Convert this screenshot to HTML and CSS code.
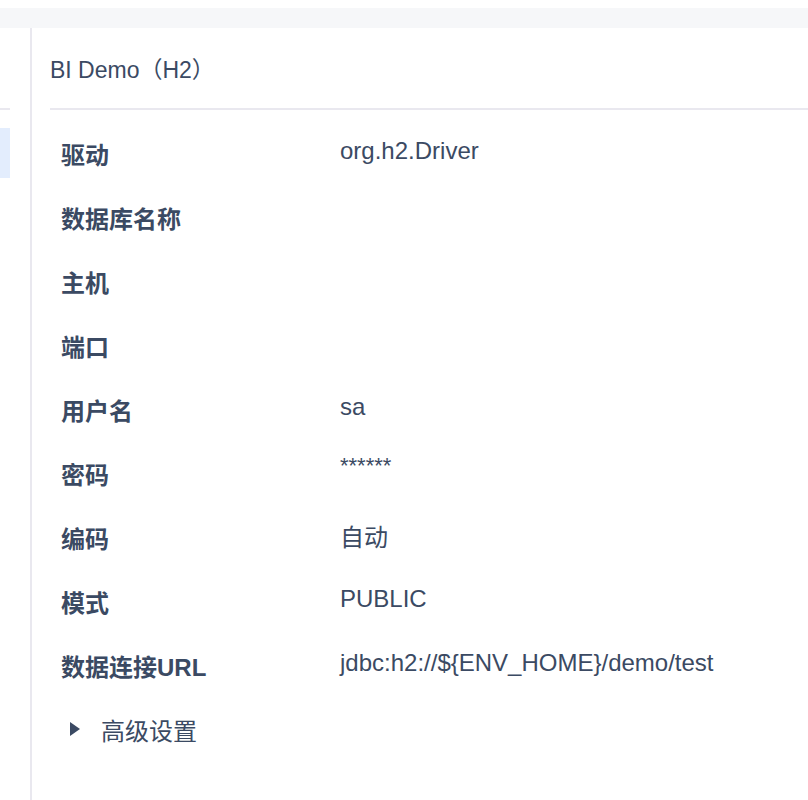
FILE: index.html
```html
<!DOCTYPE html>
<html>
<head>
	<meta charset="utf-8">
	<title>BI Demo（H2）</title>
	<link rel="stylesheet" href="styles.css">
</head>
<body>
	<div class="topbar"></div>
	<div class="main">
		<div class="sidebar">
			<div class="side-head"></div>
			<div class="side-item"></div>
		</div>
		<div class="content">
			<div class="header">BI Demo（H2）</div>
			<div class="fields">
				<div class="row"><div class="label">驱动</div><div class="value">org.h2.Driver</div></div>
				<div class="row"><div class="label">数据库名称</div><div class="value"></div></div>
				<div class="row"><div class="label">主机</div><div class="value"></div></div>
				<div class="row"><div class="label">端口</div><div class="value"></div></div>
				<div class="row"><div class="label">用户名</div><div class="value">sa</div></div>
				<div class="row"><div class="label">密码</div><div class="value password">******</div></div>
				<div class="row"><div class="label">编码</div><div class="value">自动</div></div>
				<div class="row"><div class="label">模式</div><div class="value">PUBLIC</div></div>
				<div class="row"><div class="label">数据连接URL</div><div class="value">jdbc:h2://${ENV_HOME}/demo/test</div></div>
			</div>
			<div class="advanced">
				<span class="arrow"></span>
				<span class="advanced-text">高级设置</span>
			</div>
		</div>
	</div>
</body>
</html>
```

FILE: styles.css
```css
html, body {
	height: 100%;
}
body {
	margin: 0;
	font-family: "Liberation Sans", "Noto Sans CJK SC", sans-serif;
	color: #3b4a63;
	background-color: #fff;
	overflow: hidden;
}
.topbar {
	height: 20px;
	margin-top: 8px;
	background-color: #f6f7f9;
}
.main {
	display: flex;
	height: calc(100% - 28px);
}
.sidebar {
	width: 10px;
	padding-right: 20px;
	border-right: 2px solid #e9e8ef;
}
.side-head {
	height: 80px;
	border-bottom: 2px solid #e9e8ef;
}
.side-item {
	height: 50px;
	margin-top: 18px;
	background-color: #e3edfd;
}
.content {
	flex: 1;
	padding-left: 18px;
}
.header {
	height: 80px;
	line-height: 84px;
	font-size: 23px;
	border-bottom: 2px solid #e9e8ef;
}
.fields {
	margin-top: 11px;
	padding-left: 11px;
}
.row {
	display: flex;
	height: 64px;
	align-items: center;
	font-size: 24px;
}
.label {
	width: 279px;
	font-weight: bold;
}
.value {
	padding-bottom: 4px;
}
.password {
	font-size: 22px;
	padding-bottom: 14px;
}
.advanced {
	display: flex;
	align-items: center;
	height: 64px;
	padding-left: 20px;
	font-size: 24px;
}
.arrow {
	width: 0;
	height: 0;
	border-top: 7px solid transparent;
	border-bottom: 7px solid transparent;
	border-left: 10px solid #3b4a63;
	margin-right: 21px;
}
```
